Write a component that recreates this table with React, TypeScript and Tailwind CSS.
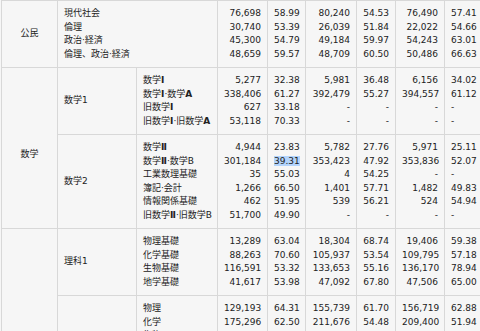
import type { ReactNode } from "react";

type Item = { name: ReactNode; v: string[] };
type Sub = { label?: string; items: Item[] };
type Group = { label: string; pad?: string; subs: Sub[] };

const B = ({ children }: { children: ReactNode }) => (
  <b className="font-bold">{children}</b>
);

const dash = ["-", "-", "-", "-", "-", "-"];

const groups: Group[] = [
  {
    label: "公民",
    subs: [
      {
        items: [
          { name: "現代社会", v: ["76,698", "58.99", "80,240", "54.53", "76,490", "57.41"] },
          { name: "倫理", v: ["30,740", "53.39", "26,039", "51.84", "22,022", "54.66"] },
          { name: "政治·経済", v: ["45,300", "54.79", "49,184", "59.97", "54,243", "63.01"] },
          { name: "倫理、政治·経済", v: ["48,659", "59.57", "48,709", "60.50", "50,486", "66.63"] },
        ],
      },
    ],
  },
  {
    label: "数学",
    pad: "pt-[19px]",
    subs: [
      {
        label: "数学1",
        items: [
          { name: <>数学<B>Ⅰ</B></>, v: ["5,277", "32.38", "5,981", "36.48", "6,156", "34.02"] },
          { name: <>数学<B>Ⅰ</B>·数学<B>A</B></>, v: ["338,406", "61.27", "392,479", "55.27", "394,557", "61.12"] },
          { name: <>旧数学<B>Ⅰ</B></>, v: ["627", "33.18", "-", "-", "-", "-"] },
          { name: <>旧数学<B>Ⅰ</B>·旧数学<B>A</B></>, v: ["53,118", "70.33", "-", "-", "-", "-"] },
        ],
      },
      {
        label: "数学2",
        items: [
          { name: <>数学<B>Ⅱ</B></>, v: ["4,944", "23.83", "5,782", "27.76", "5,971", "25.11"] },
          { name: <>数学<B>Ⅱ</B>·数学B</>, v: ["301,184", "39.31", "353,423", "47.92", "353,836", "52.07"] },
          { name: "工業数理基礎", v: ["35", "55.03", "4", "54.25", "-", "-"] },
          { name: "簿記·会計", v: ["1,266", "66.50", "1,401", "57.71", "1,482", "49.83"] },
          { name: "情報関係基礎", v: ["462", "51.95", "539", "56.21", "524", "54.94"] },
          { name: <>旧数学<B>Ⅱ</B>·旧数学B</>, v: ["51,700", "49.90", "-", "-", "-", "-"] },
        ],
      },
    ],
  },
  {
    label: "理科",
    subs: [
      {
        label: "理科1",
        items: [
          { name: "物理基礎", v: ["13,289", "63.04", "18,304", "68.74", "19,406", "59.38"] },
          { name: "化学基礎", v: ["88,263", "70.60", "105,937", "53.54", "109,795", "57.18"] },
          { name: "生物基礎", v: ["116,591", "53.32", "133,653", "55.16", "136,170", "78.94"] },
          { name: "地学基礎", v: ["41,617", "53.98", "47,092", "67.80", "47,506", "65.00"] },
        ],
      },
      {
        label: "理科2",
        items: [
          { name: "物理", v: ["129,193", "64.31", "155,739", "61.70", "156,719", "62.88"] },
          { name: "化学", v: ["175,296", "62.50", "211,676", "54.48", "209,400", "51.94"] },
          { name: "生物", v: ["46,586", "66.99", "72,081", "52.03", "78,250", "51.54"] },
          { name: "地学", v: ["1,171", "52.40", "1,587", "57.13", "1,826", "43.68"] },
          { name: <>旧物理<B>Ⅰ</B></>, v: dash },
          { name: <>旧化学<B>Ⅰ</B></>, v: dash },
          { name: <>旧生物<B>Ⅰ</B></>, v: dash },
          { name: <>旧地学<B>Ⅰ</B></>, v: dash },
        ],
      },
      {
        label: "理科総合",
        items: [
          { name: <>旧理科総合<B>A</B></>, v: dash },
          { name: <>旧理科総合<B>B</B></>, v: dash },
        ],
      },
    ],
  },
];

const cell = "border border-[#d8d8d8] px-[6px] py-[6px] align-middle";

const App = () => {
  return (
    <div className="min-h-screen bg-[#f6f6f6] pl-px text-[9px] leading-[13.5px] text-[#222] [font-family:'DejaVu_Sans','Noto_Sans_CJK_JP',sans-serif]">
      <table className="w-[540px] table-fixed border-collapse">
        <colgroup>
          <col className="w-[56px]" />
          <col className="w-[79px]" />
          <col className="w-[81px]" />
          <col className="w-[50px]" />
          <col className="w-[38px]" />
          <col className="w-[51px]" />
          <col className="w-[39px]" />
          <col className="w-[49px]" />
          <col className="w-[97px]" />
        </colgroup>
        <tbody>
          {groups.map((g) =>
            g.subs.map((s, si) => (
              <tr key={g.label + si}>
                {si === 0 && (
                  <td rowSpan={g.subs.length} className={`${cell} text-center ${g.pad ?? ""}`}>
                    {g.label}
                  </td>
                )}
                {s.label && <td className={`${cell} whitespace-nowrap`}>{s.label}</td>}
                <td colSpan={s.label ? 1 : 2} className={`${cell} whitespace-nowrap`}>
                  {s.items.map((it, i) => (
                    <div key={i}>{it.name}</div>
                  ))}
                </td>
                {[0, 1, 2, 3, 4, 5].map((c) => (
                  <td key={c} className={`${cell} whitespace-nowrap ${c === 5 ? "text-left" : "text-right"}`}>
                    {s.items.map((it, i) => (
                      <div key={i}>
                        {it.v[c] === "39.31" ? (
                          <span className="bg-[#b3d4fc]">{it.v[c]}</span>
                        ) : (
                          it.v[c]
                        )}
                      </div>
                    ))}
                  </td>
                ))}
              </tr>
            ))
          )}
        </tbody>
      </table>
    </div>
  );
};

export default App;
